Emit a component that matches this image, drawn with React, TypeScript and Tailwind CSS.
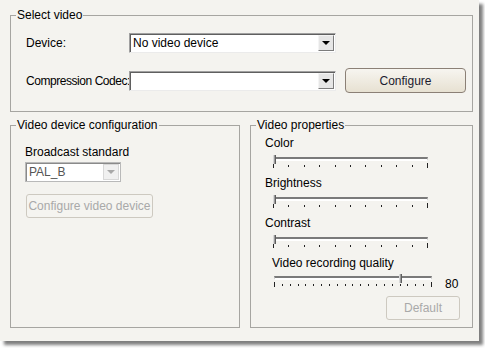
const FONT = "font-['Liberation_Sans',Arial,sans-serif]";

function Arrow({ disabled }: { disabled?: boolean }) {
  return (
    <div
      className={`w-[16px] h-[16px] mr-[1px] flex items-center justify-center border ${
        disabled
          ? 'bg-[#f0f0f0] border-[#d8d8d8]'
          : 'bg-[#e6e6e6] border-t-[#f4f4f4] border-l-[#f4f4f4] border-b-[#7c7c7c] border-r-[#7c7c7c]'
      }`}
    >
      <div
        className={`w-0 h-0 border-x-[4px] border-x-transparent border-t-[4px] ${
          disabled ? 'border-t-[#a8a8a8]' : 'border-t-black'
        }`}
      />
    </div>
  );
}

function Combo({ value, w, disabled }: { value: string; w: string; disabled?: boolean }) {
  return (
    <div
      className={`${w} h-[20px] shrink-0 flex items-center bg-white border ${
        disabled
          ? 'border-[#b9b9b9] shadow-[inset_1px_1px_0_#8a8a8a]'
          : 'border-t-[#a0a0a0] border-l-[#a0a0a0] border-b-[#ebebeb] border-r-[#ebebeb] shadow-[inset_1px_1px_0_#5f5f5f]'
      }`}
    >
      <span className={`flex-1 pl-[3px] text-[12px] leading-[14px] ${disabled ? 'text-[#555]' : 'text-black'}`}>
        {value}
      </span>
      <Arrow disabled={disabled} />
    </div>
  );
}

function Ticks({ count }: { count: number }) {
  return (
    <div className="flex justify-between items-start h-[5px]">
      {Array.from({ length: count }).map((_, i) => (
        <div
          key={i}
          className={`w-[1px] bg-[#222] ${i === 0 || i === count - 1 ? 'h-[5px]' : 'h-[2px] mt-[2px]'}`}
        />
      ))}
    </div>
  );
}

function Slider({ pct, ticks, w }: { pct: number; ticks: number; w: string }) {
  return (
    <div className={w}>
      <div className="relative h-[4px] border-t-2 border-t-[#7a7a7a] border-b-2 border-b-white border-x border-x-[#c9c9c9]">
        <div
          className="absolute top-[-4px] w-[3px] h-[9px] bg-[#9a9a9a] border-l border-l-[#d8d8d8] border-r border-r-[#5e5e5e]"
          style={{ left: `calc(${pct}% - 1px)` }}
        />
      </div>
      <div className="mt-[2px]">
        <Ticks count={ticks} />
      </div>
    </div>
  );
}

function DisabledButton({ label, w }: { label: string; w: string }) {
  return (
    <div
      className={`${w} h-[24px] rounded-[3px] border border-[#cdc9c0] bg-[#f5f4f0] flex items-center justify-center text-[12px] text-[#a9a9a9]`}
    >
      {label}
    </div>
  );
}

export default function App() {
  return (
    <div className={`w-[485px] h-[348px] bg-white ${FONT} text-[12px] leading-[14px] text-black`}>
      <div className="w-[479px] h-[341px] bg-[#f4f3ef] shadow-[4px_4px_3px_rgba(0,0,0,0.5)] pl-[10px] pt-[8px]">
        {/* Select video */}
        <fieldset className="w-[463px] h-[104px] border border-[#a6a5a1]">
          <legend className="ml-[5px] px-[1px] leading-[14px]">Select video</legend>
          <div className="pl-[15px] mt-[11px] flex items-center h-[20px]">
            <span className="w-[103px] shrink-0">Device:</span>
            <Combo value="No video device" w="w-[207px]" />
          </div>
          <div className="pl-[15px] mt-[15px] flex items-center h-[25px]">
            <span className="w-[103px] shrink-0 whitespace-nowrap tracking-[-0.45px]">Compression Codec:</span>
            <Combo value="" w="w-[207px]" />
            <div className="ml-[9px] w-[121px] h-[25px] rounded-[4px] border border-[#8b8076] bg-gradient-to-b from-[#f7f5f0] to-[#e7e1d2] flex items-center justify-center text-[#1b1b2e]">
              Configure
            </div>
          </div>
        </fieldset>

        <div className="mt-[6px] flex gap-[10px]">
          {/* Video device configuration */}
          <fieldset className="w-[230px] h-[210px] border border-[#a6a5a1]">
            <legend className="ml-[5px] px-[1px] leading-[14px]">Video device configuration</legend>
            <div className="pl-[14px] mt-[13px]">
              <div>Broadcast standard</div>
              <div className="mt-[3px]">
                <Combo value="PAL_B" w="w-[96px]" disabled />
              </div>
              <div className="mt-[12px] ml-[1px]">
                <DisabledButton label="Configure video device" w="w-[127px]" />
              </div>
            </div>
          </fieldset>

          {/* Video properties */}
          <fieldset className="w-[223px] h-[210px] border border-[#a6a5a1]">
            <legend className="ml-[5px] px-[1px] leading-[14px]">Video properties</legend>
            <div className="pl-[14px] mt-[4px]">
              <div>Color</div>
              <div className="ml-[8px] mt-[7px]">
                <Slider pct={0} ticks={11} w="w-[155px]" />
              </div>
              <div className="mt-[8px]">Brightness</div>
              <div className="ml-[8px] mt-[7px]">
                <Slider pct={0} ticks={11} w="w-[155px]" />
              </div>
              <div className="mt-[8px]">Contrast</div>
              <div className="ml-[8px] mt-[7px]">
                <Slider pct={0} ticks={11} w="w-[155px]" />
              </div>
              <div className="mt-[8px] ml-[7px]">Video recording quality</div>
              <div className="ml-[9px] mt-[6px] flex items-end">
                <Slider pct={80} ticks={21} w="w-[158px]" />
                <span className="ml-[13px] mb-[-4px]">80</span>
              </div>
              <div className="mt-[9px] flex justify-end pr-[12px]">
                <DisabledButton label="Default" w="w-[74px]" />
              </div>
            </div>
          </fieldset>
        </div>
      </div>
    </div>
  );
}
